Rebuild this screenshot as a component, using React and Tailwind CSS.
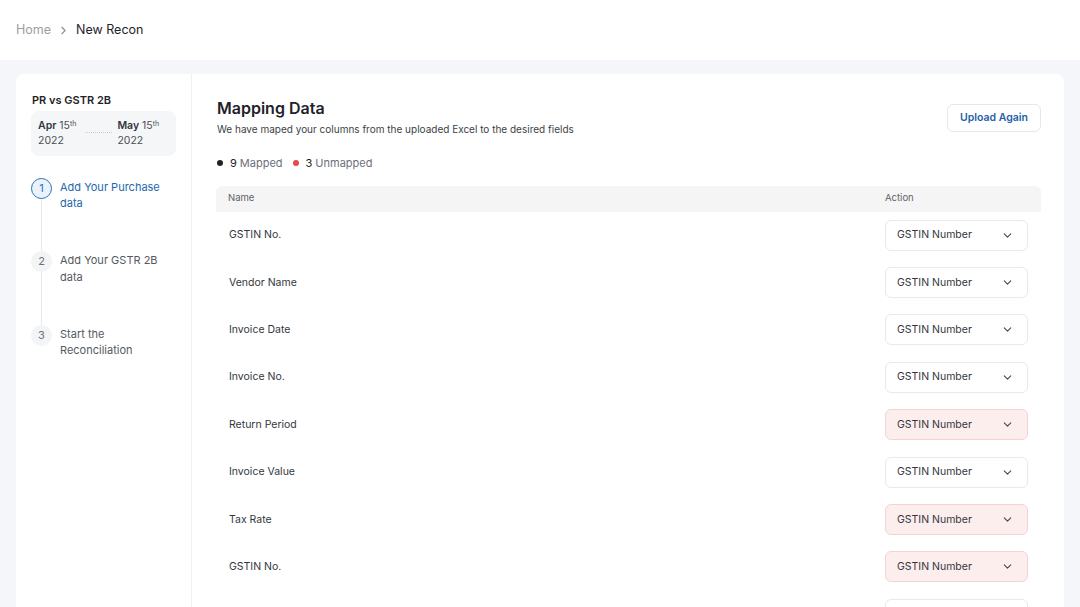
import { ChevronRight, ChevronDown } from "lucide-react";

const rows = [
  { name: "GSTIN No.", unmapped: false },
  { name: "Vendor Name", unmapped: false },
  { name: "Invoice Date", unmapped: false },
  { name: "Invoice No.", unmapped: false },
  { name: "Return Period", unmapped: true },
  { name: "Invoice Value", unmapped: false },
  { name: "Tax Rate", unmapped: true },
  { name: "GSTIN No.", unmapped: true },
];

const steps = [
  { n: 1, label: ["Add Your Purchase", "data"], active: true },
  { n: 2, label: ["Add Your GSTR 2B", "data"], active: false },
  { n: 3, label: ["Start the", "Reconciliation"], active: false },
];

const Sidebar = () => (
  <div className="w-[176px] shrink-0 bg-white rounded-tl-lg px-[15px] pt-[18px] border-r border-[#eef0f3]">
    <p className="text-[11px] font-semibold text-[#1f2329] pl-[1px]">PR vs GSTR 2B</p>
    <div className="mt-[2px] bg-[#f5f6f8] rounded-lg h-[45px] flex items-center px-[7px] text-[10.5px] text-[#4b4f56] leading-[15px]">
      <div>
        <p>
          <span className="font-semibold text-[#33373d]">Apr</span> 15<sup className="text-[7px]">th</sup>
        </p>
        <p>2022</p>
      </div>
      <div className="ml-[9px] mr-[5px] w-[27px] border-t border-dotted border-[#c9ccd1] -mt-[2px]" />
      <div>
        <p>
          <span className="font-semibold text-[#33373d]">May</span> 15<sup className="text-[7px]">th</sup>
        </p>
        <p>2022</p>
      </div>
    </div>
    <div className="mt-[22px] flex flex-col">
      {steps.map((s, i) => (
        <div key={s.n} className="flex gap-[8px]">
          <div className="flex flex-col items-center w-[21px]">
            <div
              className={
                s.active
                  ? "w-[21px] h-[21px] rounded-full border-[1.5px] border-[#2f6fb8] bg-[#eaf2fb] text-[#2f6fb8] flex items-center justify-center text-[11px]"
                  : "w-[21px] h-[21px] rounded-full bg-[#f3f4f6] text-[#6b7078] flex items-center justify-center text-[11px]"
              }
            >
              {s.n}
            </div>
            {i < steps.length - 1 && <div className="w-px h-[52.5px] bg-[#e6e8eb]" />}
          </div>
          <div
            className={
              s.active
                ? "text-[11px] leading-[16.5px] text-[#2566ad] mt-[1px]"
                : "text-[11px] leading-[16.5px] text-[#555a61] mt-[1px]"
            }
          >
            <p>{s.label[0]}</p>
            <p>{s.label[1]}</p>
          </div>
        </div>
      ))}
    </div>
  </div>
);

const Select = ({ unmapped, label }) => (
  <div
    className={
      unmapped
        ? "w-[143px] h-[31px] rounded-md border border-[#f6d3d3] bg-[#fdeeee] flex items-center justify-between pl-[11px] pr-[13px]"
        : "w-[143px] h-[31px] rounded-md border border-[#e7e9ec] bg-white flex items-center justify-between pl-[11px] pr-[13px]"
    }
  >
    <span className="text-[10.5px] text-[#33373d]">{label}</span>
    <ChevronDown size={13} strokeWidth={2} className="text-[#44484e]" />
  </div>
);

export default function App() {
  return (
    <div className="w-[1080px] h-[607px] overflow-hidden bg-[#f4f6f9] font-['Inter','Noto_Sans',sans-serif]">
      <div className="h-[60px] bg-white flex items-center px-[16px] pt-[1px] text-[12.5px]">
        <span className="text-[#9aa0a6]">Home</span>
        <ChevronRight size={13} className="mx-[6px] text-[#8a8f96]" />
        <span className="text-[#1f2329]">New Recon</span>
      </div>
      <div className="flex pl-[16px] pr-[16px] pt-[14px] h-[547px]">
        <Sidebar />
        <div className="flex-1 bg-white rounded-tr-lg pl-[24px] pr-[23px] pt-[24px]">
          <div className="flex justify-between items-start">
            <div className="pl-[1px]">
              <h1 className="text-[16px] font-semibold text-[#1f2329] leading-[20px]">Mapping Data</h1>
              <p className="text-[10px] text-[#3b3f45] mt-[4px]">
                We have maped your columns from the uploaded Excel to the desired fields
              </p>
            </div>
            <button className="mt-[6px] h-[28px] px-[12px] rounded-md border border-[#e4e7eb] text-[10.5px] font-semibold text-[#1f5fa8] bg-white">
              Upload Again
            </button>
          </div>
          <div className="flex items-center mt-[18px] text-[11px] text-[#6b7078] pl-[1px]">
            <span className="w-[6px] h-[6px] rounded-full bg-[#1f2329] mr-[7px]" />
            <span className="text-[#1f2329] mr-[3px]">9</span>
            <span>Mapped</span>
            <span className="w-[6px] h-[6px] rounded-full bg-[#e5484d] ml-[10px] mr-[7px]" />
            <span className="text-[#1f2329] mr-[3px]">3</span>
            <span>Unmapped</span>
          </div>
          <div className="mt-[14px]">
            <div className="h-[26px] bg-[#f5f5f6] rounded-t-md flex items-center text-[9.5px] text-[#5e636a]">
              <span className="pl-[12px] flex-1">Name</span>
              <span className="w-[156px]">Action</span>
            </div>
            {rows.map((r, i) => (
              <div key={i} className="h-[47.4px] flex items-center">
                <span className="pl-[13px] flex-1 text-[10.5px] text-[#33373d]">{r.name}</span>
                <div className="w-[156px]">
                  <Select unmapped={r.unmapped} label="GSTIN Number" />
                </div>
              </div>
            ))}
            <div className="h-[47.4px] flex items-center">
              <span className="flex-1" />
              <div className="w-[156px]">
                <Select unmapped={false} label="" />
              </div>
            </div>
          </div>
        </div>
      </div>
    </div>
  );
}
